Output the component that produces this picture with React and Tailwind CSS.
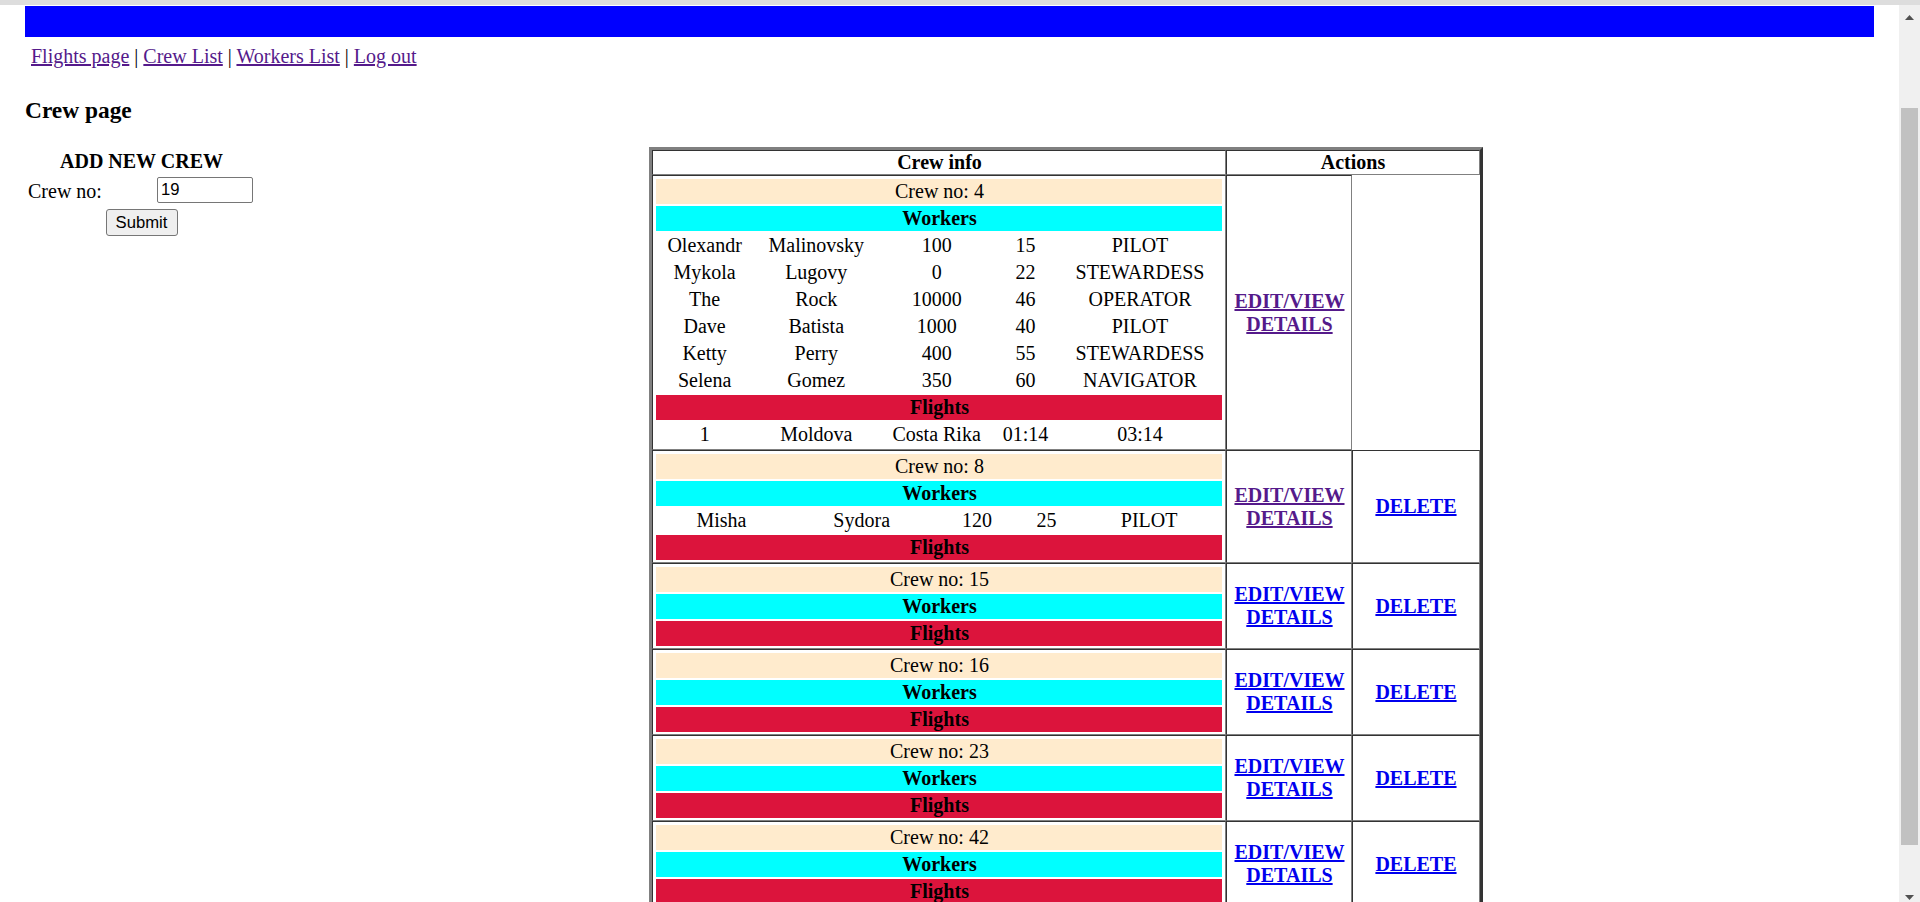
import React from "react";

const CELL =
  "border border-solid border-t-[#333333] border-l-[#333333] border-r-[#808080] border-b-[#808080]";

const crews = [
  {
    no: 4,
    workers: [
      ["Olexandr", "Malinovsky", "100", "15", "PILOT"],
      ["Mykola", "Lugovy", "0", "22", "STEWARDESS"],
      ["The", "Rock", "10000", "46", "OPERATOR"],
      ["Dave", "Batista", "1000", "40", "PILOT"],
      ["Ketty", "Perry", "400", "55", "STEWARDESS"],
      ["Selena", "Gomez", "350", "60", "NAVIGATOR"],
    ],
    flights: [["1", "Moldova", "Costa Rika", "01:14", "03:14"]],
    visited: true,
    deletable: false,
  },
  {
    no: 8,
    workers: [["Misha", "Sydora", "120", "25", "PILOT"]],
    flights: [],
    visited: true,
    deletable: true,
  },
  { no: 15, workers: [], flights: [], visited: false, deletable: true },
  { no: 16, workers: [], flights: [], visited: false, deletable: true },
  { no: 23, workers: [], flights: [], visited: false, deletable: true },
  { no: 42, workers: [], flights: [], visited: false, deletable: true },
];

function CrewInfo({ crew }) {
  return (
    <table className="w-full border-separate border-spacing-[2px] text-center">
      <tbody>
        <tr>
          <td colSpan={5} className="bg-[#ffebcd] p-[1px]">
            Crew no: {crew.no}
          </td>
        </tr>
        <tr>
          <th colSpan={5} className="bg-[#00ffff] p-[1px] font-bold">
            Workers
          </th>
        </tr>
        {crew.workers.map((w, i) => (
          <tr key={"w" + i}>
            {w.map((v, j) => (
              <td key={j} className="p-[1px]">
                {v}
              </td>
            ))}
          </tr>
        ))}
        <tr>
          <th colSpan={5} className="bg-[#dc143c] p-[1px] font-bold">
            Flights
          </th>
        </tr>
        {crew.flights.map((f, i) => (
          <tr key={"f" + i}>
            {f.map((v, j) => (
              <td key={j} className="p-[1px]">
                {v}
              </td>
            ))}
          </tr>
        ))}
      </tbody>
    </table>
  );
}

function CrewTable() {
  return (
    <table className="w-[833px] table-fixed border-separate border-spacing-0 border-[3px] border-solid border-t-[#808080] border-l-[#808080] border-r-[#333333] border-b-[#333333] text-[20px] leading-[23px]">
      <colgroup>
        <col className="w-[574px]" />
        <col className="w-[126px]" />
        <col className="w-[127px]" />
      </colgroup>
      <thead>
        <tr>
          <th className={CELL + " p-0 font-bold text-center"}>Crew info</th>
          <th colSpan={2} className={CELL + " p-0 font-bold text-center"}>
            Actions
          </th>
        </tr>
      </thead>
      <tbody>
        {crews.map((c) => (
          <tr key={c.no}>
            <td className={CELL + " px-[1px] pt-[1px] pb-0 align-middle"}>
              <CrewInfo crew={c} />
            </td>
            <td className={CELL + " p-[1px] text-center align-middle"}>
              <a
                href="#"
                className={
                  c.visited
                    ? "font-bold underline text-[#551a8b]"
                    : "font-bold underline text-[#0000ee]"
                }
              >
                EDIT/VIEW DETAILS
              </a>
            </td>
            {c.deletable && (
              <td className={CELL + " p-[1px] text-center align-middle"}>
                <a href="#" className="font-bold underline text-[#0000ee]">
                  DELETE
                </a>
              </td>
            )}
          </tr>
        ))}
      </tbody>
    </table>
  );
}

function FormTable() {
  return (
    <table className="w-[233px] shrink-0 border-separate border-spacing-[2px] text-[20px] leading-[23px]">
      <tbody>
        <tr>
          <th colSpan={2} className="p-[1px] font-bold text-center">
            ADD NEW CREW
          </th>
        </tr>
        <tr>
          <td className="w-[127px] p-[1px] text-left align-middle">Crew no:</td>
          <td className="px-[1px] pt-[1px] pb-[3px] text-left align-middle">
            <input
              type="text"
              defaultValue="19"
              className="block w-[96px] h-[26px] border border-solid border-[#767676] rounded-[2px] bg-white px-[3px] font-['Liberation_Sans',sans-serif] text-[16.67px] text-black outline-none"
            />
          </td>
        </tr>
        <tr>
          <td colSpan={2} className="pt-[1px] text-center">
            <button
              type="button"
              className="block mx-auto w-[72px] h-[27px] border border-solid border-[#767676] rounded-[3px] bg-[#efefef] font-['Liberation_Sans',sans-serif] text-[16.67px] leading-[19px] text-black"
            >
              Submit
            </button>
          </td>
        </tr>
      </tbody>
    </table>
  );
}

function Scrollbar() {
  return (
    <div className="w-[21px] shrink-0 bg-[#f0f0f0] flex flex-col items-center">
      <svg width="9" height="5" viewBox="0 0 9 5" className="mt-[10px] shrink-0">
        <polygon points="4.5,0 9,5 0,5" fill="#505050" />
      </svg>
      <div className="mt-[88px] w-[17px] h-[737px] shrink-0 bg-[#c1c1c1]" />
      <svg width="9" height="5" viewBox="0 0 9 5" className="mt-[50px] shrink-0">
        <polygon points="0,0 9,0 4.5,5" fill="#505050" />
      </svg>
    </div>
  );
}

export default function App() {
  return (
    <div className="h-[902px] w-full overflow-hidden flex flex-col bg-white text-black font-['Liberation_Serif',serif]">
      <div className="h-[5px] shrink-0 bg-[#dddddd]" />
      <div className="flex flex-1 min-h-0">
        <main className="flex-1 min-w-0 overflow-hidden px-[25px] pt-[1px]">
          <div className="h-[31px] bg-[#0000ff]" />
          <nav className="mt-[7.5px] pl-[6px] text-[20px] leading-[23px]">
            <a href="#" className="underline text-[#551a8b]">Flights page</a> |{" "}
            <a href="#" className="underline text-[#551a8b]">Crew List</a> |{" "}
            <a href="#" className="underline text-[#551a8b]">Workers List</a> |{" "}
            <a href="#" className="underline text-[#551a8b]">Log out</a>
          </nav>
          <h3 className="mt-[29px] mb-[23.5px] text-[23.4px] leading-[27px] font-bold">
            Crew page
          </h3>
          <div className="flex items-start">
            <FormTable />
            <div className="flex-1 flex justify-center">
              <CrewTable />
            </div>
          </div>
        </main>
        <Scrollbar />
      </div>
    </div>
  );
}
